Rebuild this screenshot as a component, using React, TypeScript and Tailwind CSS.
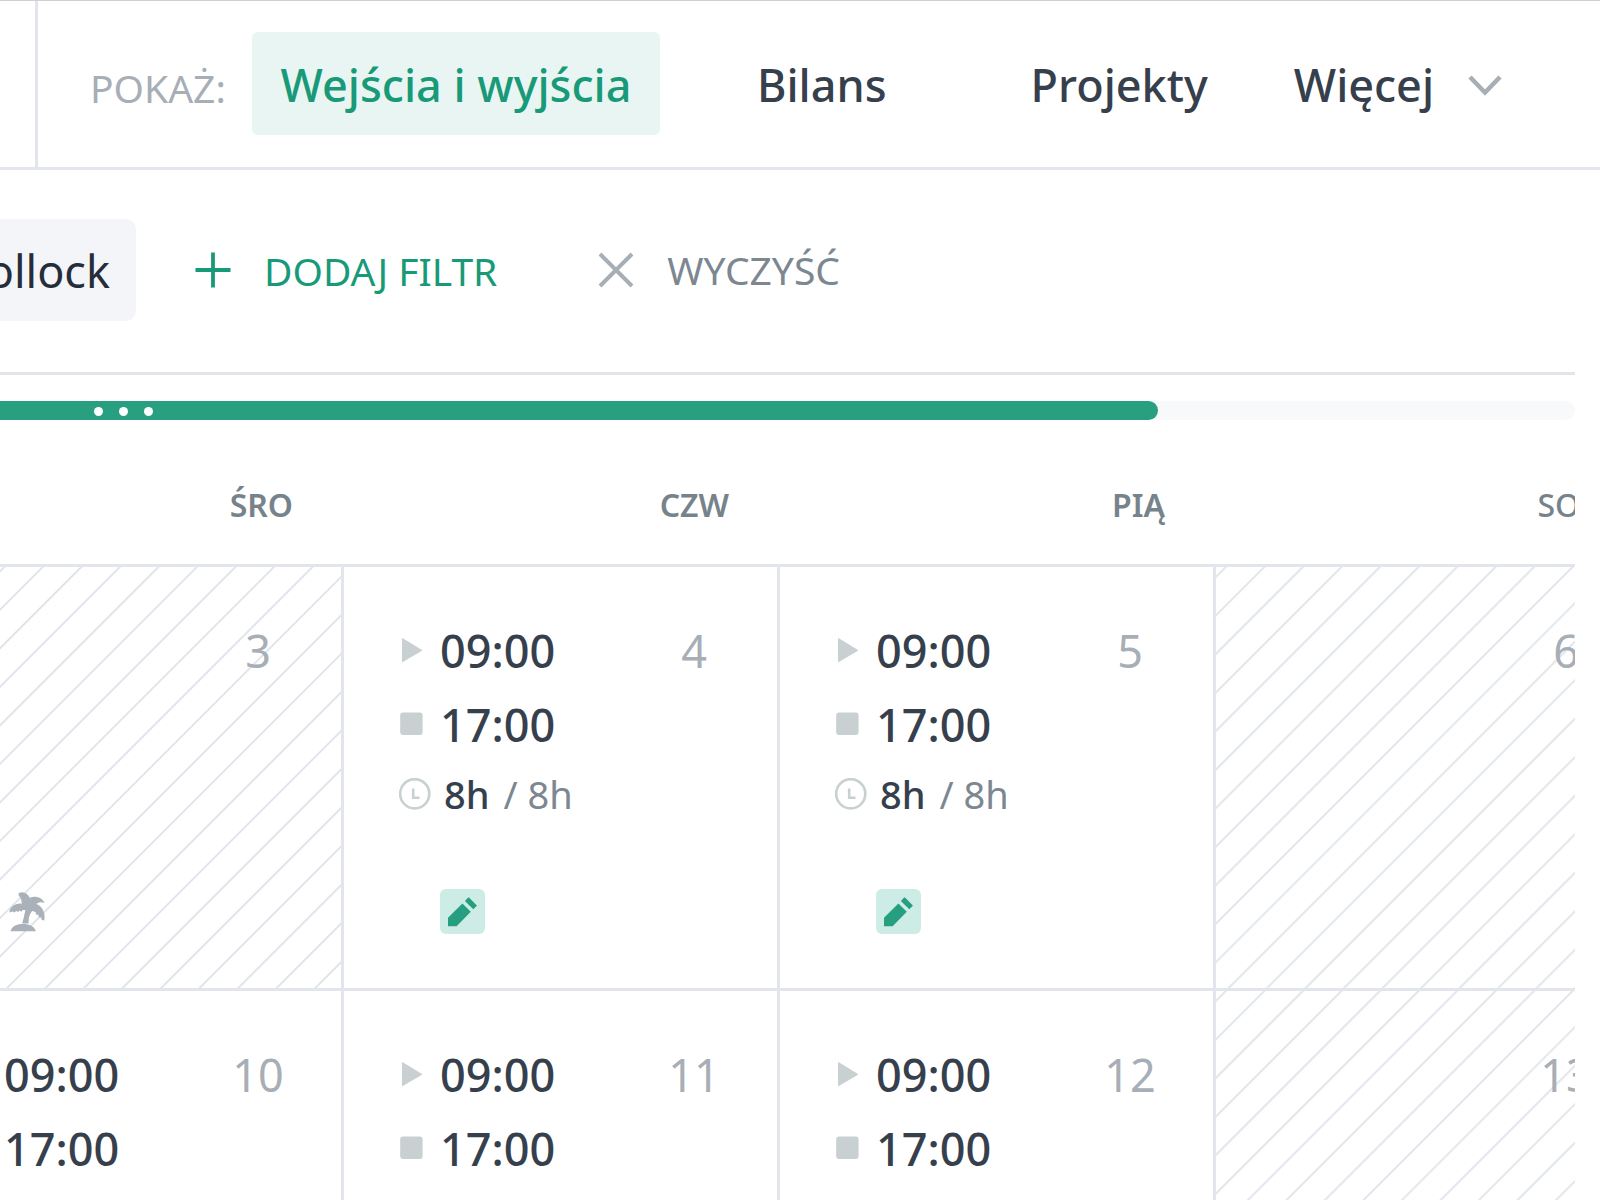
import { useId, useState } from "react";

type Day = {
  number: number;
  off?: "holiday" | "weekend";
  start?: string;
  end?: string;
};

const weekdays = ["Śro", "Czw", "Pią", "Sob"];

const weeks: Day[][] = [
  [
    { number: 3, off: "holiday" },
    { number: 4, start: "09:00", end: "17:00" },
    { number: 5, start: "09:00", end: "17:00" },
    { number: 6, off: "weekend" },
  ],
  [
    { number: 10, start: "09:00", end: "17:00" },
    { number: 11, start: "09:00", end: "17:00" },
    { number: 12, start: "09:00", end: "17:00" },
    { number: 13, off: "weekend" },
  ],
];

function PlayIcon() {
  return (
    <svg viewBox="0 0 24 26" className="h-[26px] w-6 fill-[#c8d0d1]" aria-hidden="true">
      <path d="M3 .7v23c0 .5.4.6.8.4L22.6 12.9c.5-.3.5-.9 0-1.2L3.8.3c-.4-.2-.8-.1-.8.4Z" />
    </svg>
  );
}

function StopIcon() {
  return (
    <svg viewBox="0 0 24 26" className="h-[26px] w-6 fill-[#c8d0d1]" aria-hidden="true">
      <rect x="1.2" y=".6" width="22.4" height="22.4" rx="3" />
    </svg>
  );
}

function ClockIcon() {
  return (
    <svg viewBox="0 0 32 32" className="size-8 fill-none stroke-[#c8d0d1]" aria-hidden="true">
      <circle cx="15.7" cy="15.8" r="14.6" strokeWidth="2.6" />
      <path d="M14.2 10.6v9.2h6.3" strokeWidth="2.6" />
    </svg>
  );
}

function PencilIcon() {
  return (
    <svg viewBox="0 0 45 45" className="size-[45px] fill-[#269f80]" aria-hidden="true">
      <path d="M8 37.2v-8.4l14.4-14.4 8.4 8.4-14.2 14.4Z" />
      <path d="m24.9 11.9 3.2-3.3c.3-.3.6-.3.9 0l7.6 7.6c.3.3.3.6 0 .9l-3.3 3.2Z" />
    </svg>
  );
}

function PalmIcon() {
  return (
    <svg viewBox="0 0 45 45" className="size-[45px] fill-[#aab1b8]" aria-hidden="true">
      <path d="M14.6 4.2c4.7-2.2 8.9.1 11.2 4.6 4.9-2.2 12.5-.5 14.6 5.1-2.7-1.3-5.900-.8-8 1.100 5.500 2.300 9.400 8.100 7.900 16.600l-2.400-.6-.8-2.400-2.300-.3-.4-2.500-2.500-.3-.3-2.500-3.400-1c-2.800 3-3.900 7.200-3.500 12.600h-6.600c1.500-4.500 2.200-9 3.300-13.700l-2.800.2-.9 1.700-2.100-1.300-1.400 1.600-2-1.100-1.800 1.500-1.700-1-3.400.9c.8-5.500 6-9.600 12.500-8.700-.2-3.500-.8-5.600-3.200-8.500Z" />
      <path d="M6.5 42.3c1.5-5 5.5-7.3 12.4-7.3s11.100 2.300 13.100 7.300Z" />
    </svg>
  );
}

function Hatch({ offset }: { offset: number }) {
  const id = useId();
  return (
    <svg className="absolute inset-0 size-full" aria-hidden="true">
      <defs>
        <pattern
          id={id}
          width="27.24"
          height="27.24"
          patternUnits="userSpaceOnUse"
          patternTransform="rotate(45)"
        >
          <path d={`M${offset} 0v27.24`} stroke="#e1e5eb" strokeWidth="2" />
        </pattern>
      </defs>
      <rect width="100%" height="100%" fill={`url(#${id})`} />
    </svg>
  );
}

function DayCell({ day }: { day: Day }) {
  return (
    <td className="relative h-[424px] border-r-[3px] border-b-[3px] border-[#e2e6ec] p-0 align-top">
      {day.off && <Hatch offset={day.off === "holiday" ? 13.6 : 7} />}
      <div className="relative flex h-[421px] flex-col pt-[54px] pl-[55px]">
        <div className="flex h-[60px] items-center">
          {day.start && (
            <span className="flex items-center gap-[17px] text-[45px] font-medium text-[#36404d]">
              <PlayIcon />
              {day.start}
            </span>
          )}
          <span className="mr-[43px] ml-auto w-20 text-center text-[45px] text-[#a7aeb6]">
            {day.number}
          </span>
        </div>
        {day.end && (
          <>
            <div className="mt-3.5 flex h-[60px] items-center gap-[17px] text-[45px] font-medium text-[#36404d]">
              <StopIcon />
              {day.end}
            </div>
            <div className="mt-[11px] flex h-14 items-center gap-[13px] text-[38px] text-[#7c8790]">
              <ClockIcon />
              <span>
                <span className="mr-1 font-medium text-[#36404d]">8h</span> / 8h
              </span>
            </div>
          </>
        )}
        <div className="mt-auto mb-[54px] ml-[41px] flex">
          {day.off === "holiday" && <PalmIcon />}
          {day.start && (
            <button aria-label="Edytuj" className="rounded-[6px] bg-[#cdece5]">
              <PencilIcon />
            </button>
          )}
        </div>
      </div>
    </td>
  );
}

export default function App() {
  const [view, setView] = useState("Wejścia i wyjścia");

  const tabClass = (name: string) =>
    view === name ? "bg-[#e9f5f3] text-[#189a78]" : "text-[#36404d]";

  return (
    <div className="h-screen overflow-hidden border-t border-[#cfd0d2] bg-white font-['Noto_Sans',sans-serif] whitespace-nowrap">
      <header className="flex h-[169px] border-b-[3px] border-[#e2e6ec]">
        <div className="w-[38px] shrink-0 border-r-[3px] border-[#e2e6ec]" />
        <nav className="flex items-start pt-[31px] pl-[52px] text-[45px] leading-[101px] font-medium">
          <span className="w-[162px] text-[39px] leading-[112px] font-normal text-[#a7aeb6]">POKAŻ:</span>
          <button
            onClick={() => setView("Wejścia i wyjścia")}
            className={`w-[408px] rounded-[6px] pt-0.5 ${tabClass("Wejścia i wyjścia")}`}
          >
            Wejścia i wyjścia
          </button>
          <button
            onClick={() => setView("Bilans")}
            className={`ml-[69px] rounded-[6px] px-7 pt-0.5 ${tabClass("Bilans")}`}
          >
            Bilans
          </button>
          <button
            onClick={() => setView("Projekty")}
            className={`ml-[88px] rounded-[6px] px-7 pt-0.5 ${tabClass("Projekty")}`}
          >
            Projekty
          </button>
          <button className="ml-[58px] flex items-center gap-[34px] pt-0.5 text-[#36404d]">
            Więcej
            <svg viewBox="0 0 34 22" className="h-[22px] w-[34px] fill-none stroke-[#a7aeb6]" aria-hidden="true">
              <path d="m2 3 15 15.5L32 3" strokeWidth="4.5" />
            </svg>
          </button>
        </nav>
      </header>

      <main className="mr-[25px] overflow-hidden">
        <div className="flex h-[205px] items-center border-b-[3px] border-[#e2e6ec] pb-[3px]">
          <span className="-ml-[120px] flex h-[102px] w-64 shrink-0 items-center justify-end rounded-[10px] bg-[#f4f5f8] pt-0.5 pr-[26px] text-[45px] text-[#252d3a]">
            Pollock
          </span>
          <button className="ml-[59px] flex items-center gap-[33px] text-[39px] text-[#189a78]">
            <svg viewBox="0 0 36 36" className="size-9 fill-none stroke-current" aria-hidden="true">
              <path d="M18 .5v35M.5 18h35" strokeWidth="3.8" />
            </svg>
            <span className="pt-1">DODAJ FILTR</span>
          </button>
          <button className="ml-[101px] flex items-center gap-[33px] text-[39px] text-[#7c8790]">
            <svg viewBox="0 0 36 36" className="size-9 fill-none stroke-[#a7aeb6]" aria-hidden="true">
              <path d="m2 2 32 32M34 2 2 34" strokeWidth="4" />
            </svg>
            <span className="pt-0.5">WYCZYŚĆ</span>
          </button>
        </div>

        <div className="mt-[26px] h-[19px] overflow-hidden rounded-r-[10px] bg-[#f8f9fb]">
          <div className="flex h-full w-[73.5%] items-center gap-4 rounded-r-[10px] bg-[#279f80] pt-0.5 pl-[94px]">
            <span className="size-[9px] rounded-full bg-white" />
            <span className="size-[9px] rounded-full bg-white" />
            <span className="size-[9px] rounded-full bg-white" />
          </div>
        </div>

        <table className="-ml-[92px] w-[1744px] table-fixed border-separate border-spacing-0">
          <thead>
            <tr>
              {weekdays.map((name) => (
                <th
                  key={name}
                  className="h-[147px] border-b-[3px] border-[#e2e6ec] pt-[26px] pr-[51px] text-right text-[32px] font-semibold text-[#77838b] uppercase last:font-medium"
                >
                  {name}
                </th>
              ))}
            </tr>
          </thead>
          <tbody>
            {weeks.map((week) => (
              <tr key={week[0].number}>
                {week.map((day) => (
                  <DayCell key={day.number} day={day} />
                ))}
              </tr>
            ))}
          </tbody>
        </table>
      </main>
    </div>
  );
}
